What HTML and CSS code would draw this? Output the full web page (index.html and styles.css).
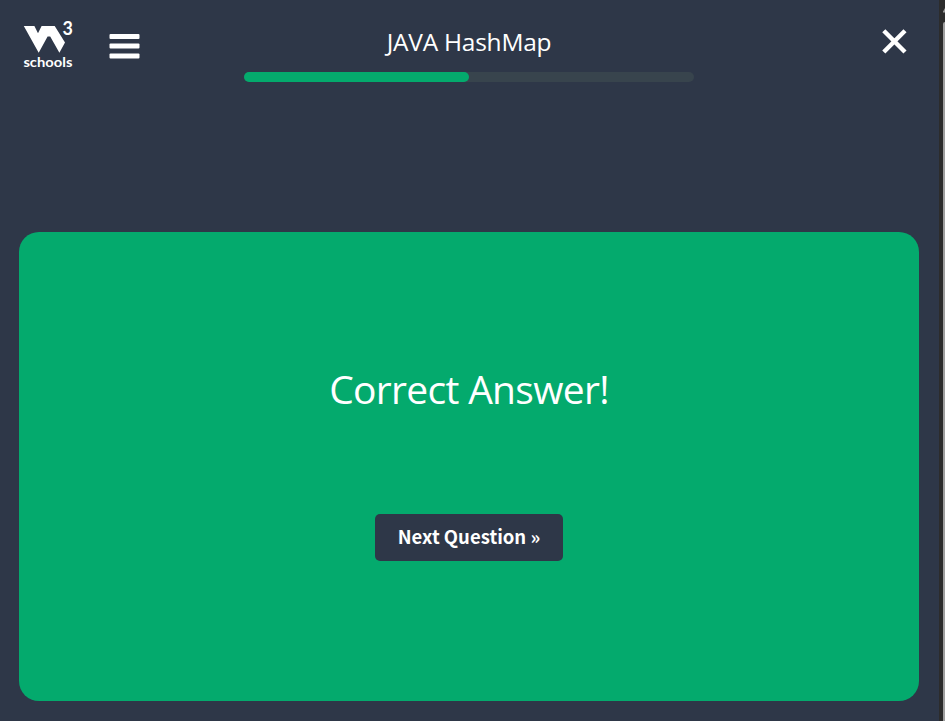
FILE: index.html
```html
<!DOCTYPE html>
<html lang="en">
<head>
<meta charset="utf-8">
<title>JAVA HashMap</title>
<link rel="stylesheet" href="styles.css">
</head>
<body>
<div class="page">
  <header class="header">
    <div class="left">
      <svg class="logo" width="52" height="58" viewBox="22 14 52 58" fill="#fff">
        <path d="M23.8 26H34.4L38 33.3 41.6 26H54.7L65 42.6 59.4 52.8 50.2 36.6 47.6 36.6 38.7 52.8Z"/>
        <text class="logo-three" x="62.4" y="35.4" textLength="10.4" lengthAdjust="spacingAndGlyphs">3</text>
        <text class="logo-name" x="23.4" y="67" textLength="49" lengthAdjust="spacingAndGlyphs">schools</text>
      </svg>
      <svg class="menu" width="31" height="26" viewBox="0 0 31 26" fill="#fff">
        <rect x=".5" y="0" width="30" height="5" rx="1"/>
        <rect x=".5" y="9.6" width="30" height="5" rx="1"/>
        <rect x=".5" y="19.4" width="30" height="5" rx="1"/>
      </svg>
    </div>
    <div class="middle">
      <div class="title">JAVA HashMap</div>
      <div class="progress"><div class="progress-fill"></div></div>
    </div>
    <svg class="close" width="27" height="27" viewBox="0 0 27 27">
      <path d="M2.8 2.8L24 24M24 2.8L2.8 24" stroke="#fff" stroke-width="4.4"/>
    </svg>
  </header>
  <main class="card">
    <h1 class="message">Correct Answer!</h1>
    <button class="next">Next Question »</button>
  </main>
</div>
<div class="scrollbar">
  <svg width="2" height="22" viewBox="0 0 2 22"><path d="M0 11.5L2 8V12.5H0Z" fill="#9f9f9f"/></svg>
  <div class="thumb"></div>
</div>
</body>
</html>
```
FILE: styles.css
```css
* { box-sizing: border-box; }
body {
  margin: 0;
  height: 721px;
  display: flex;
  overflow: hidden;
  background: #2e3748;
  color: #fff;
  font-family: "Segoe UI", "Open Sans", sans-serif;
}
.page { width: 939px; padding: 14px 20px 20px 19px; }
.header {
  height: 218px;
  display: grid;
  grid-template-columns: 225px 450px 1fr;
  align-items: start;
}
.left { display: flex; padding-left: 3px; }
.menu { margin: 20px 0 0 35px; }
.logo-three { font: bold 18.5px Lato, sans-serif; }
.logo-name { font: 700 14px Lato, sans-serif; }
.title {
  height: 58px;
  padding-top: 6px;
  line-height: 44px;
  font-size: 24.5px;
  letter-spacing: -0.25px;
  text-align: center;
}
.progress { height: 10px; border-radius: 5px; background: #38444d; }
.progress-fill { width: 50%; height: 10px; border-radius: 5px; background: #04aa6d; }
.close { justify-self: end; margin: 14px 11px 0 0; }
.card {
  height: 469px;
  width: 900px;
  padding-top: 127px;
  display: flex;
  flex-direction: column;
  align-items: center;
  border-radius: 20px;
  background: #04aa6d;
}
.message {
  margin: 0 0 95px;
  font-size: 39px;
  line-height: 60px;
  font-weight: 400;
  letter-spacing: -0.7px;
}
.next {
  width: 188px;
  height: 47px;
  padding: 0 0 2px;
  border: 0;
  border-radius: 5px;
  background: #2e3748;
  color: #fff;
  font: 700 18.5px/45px "Source Sans Pro", "Noto Sans CJK JP", sans-serif;
  white-space: nowrap;
}
.scrollbar {
  width: 6px;
  display: flex;
  flex-direction: column;
  align-items: flex-end;
  background: #2c2c2c;
}
.thumb { flex: 1; width: 2px; background: #9f9f9f; border-top-left-radius: 2px; }
```
